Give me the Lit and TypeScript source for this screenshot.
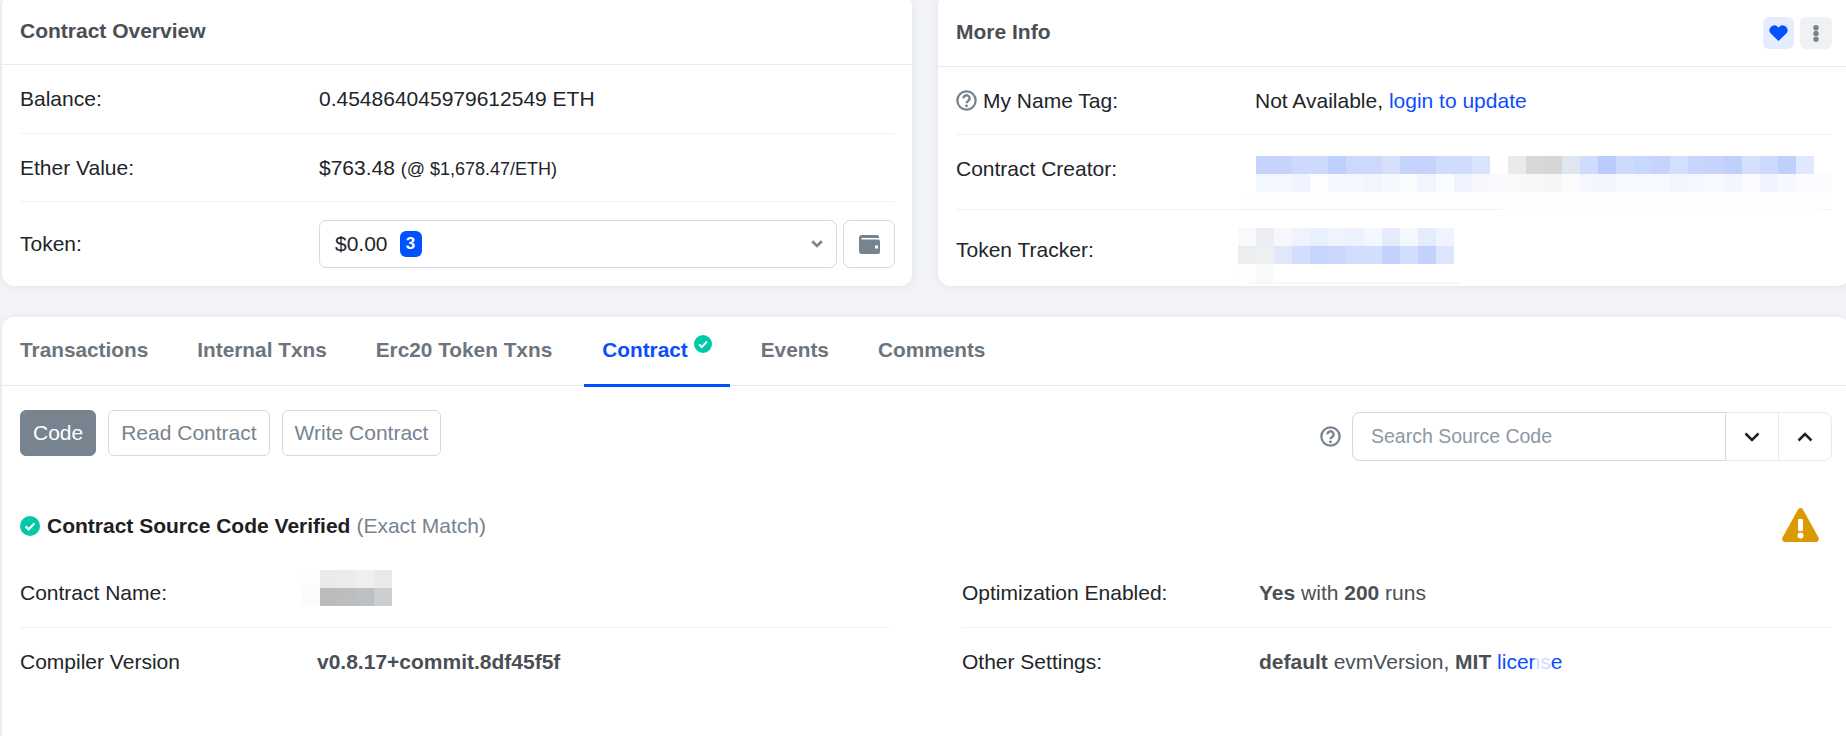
import { LitElement, html, css } from "lit";
import { customElement } from "lit/decorators.js";

const help = () => html`<svg class="help" viewBox="0 0 20 20" width="21" height="21" fill="none"><circle cx="10" cy="10" r="8.700" stroke="#77838f" stroke-width="2.200"/><path d="M7.100 8a2.900 2.900 0 1 1 4.400 2.400c-1 .6-1.500 1-1.500 2.200" stroke="#77838f" stroke-width="2.200"/><circle cx="10" cy="15.100" r="1.400" fill="#77838f"/></svg>`;
const check = (s: number) => html`<svg viewBox="0 0 20 20" width=${s} height=${s}><circle cx="10" cy="10" r="10" fill="#00c9a7"/><path d="M5.600 10.400l3 3 5.800-6.200" stroke="#fff" stroke-width="2.200" fill="none"/></svg>`;

const CREATOR = [
  "c5d3fd c5d3fd cedafd cedafd bccffd cbd9fd cbd9fd d6e0fd c5d3fc c5d3fc d0dcfd d0dcfd d8e4fe ffffff ebeae9 d9d8d9 d6d6d8 e0e5f2 d0dbfd b9ccfd cdd9fd c6d8fd c5d3fd d0e0fe c8d6fd c6d4fd bfd0fd d4e0fe cbdafd bfd0fd dee8fe",
  "f3f7ff f3f7ff eff4ff fcfdff f5f8ff f5f8ff f2f4fe f6f8ff fafbff f2f4fe fbfcff eef3fe f6f8fe f9fafe f9f9f7 f8f8f7 f5f5f5 fbfbfb f4f7ff f3f5fe f6f9ff f6f9ff f6f9ff f4f5fe f6f8ff f8faff f3f6fe f9fbff f0f4fe f6f8fe fbfcff fbfcff",
];
const TRACKER = [
  "f8f9fa edeef1 f6f7fd f0f3fe e9f0fd eff3fe ecf2fe f4f7fe e4ebfd f4f7fe e5ecfd f1f4fe",
  "ebeef0 eeeff1 e2e6f9 d2defd c6d5fd cbd8fd d2defd d2defd c3d2fd d2defd c3d2fd dbe6fe",
  "fdfdfd f9fafb",
];
const NAME = [
  "fdfdfd e9ebeb ebecec efefef e9e9e9",
  "fcfcfb b9bbbc bcbdbf bac0c3 cbcdcf",
];

@customElement("app-root")
export class AppRoot extends LitElement {
  static styles = css`
    :host { display: block; width: 1846px; height: 736px; overflow: hidden; background: #f3f4f7; font-family: "Liberation Sans", Arial, sans-serif; font-size: 21px; color: #212529; }
    .top { display: flex; gap: 26px; margin-top: -6px; padding-left: 2px; height: 292px; }
    .card { background: #fff; border-radius: 12px; box-shadow: 0 1px 8px rgba(151,164,175,.2); box-sizing: border-box; }
    .left { width: 910px; flex: none; }
    .right { width: 912px; flex: none; }
    .head { display: flex; align-items: center; justify-content: space-between; padding: 6px 18px 3px; box-sizing: border-box; border-bottom: 1px solid #e7eaf3; font-weight: 700; color: #4a4f55; }
    .left .head { height: 71px; }
    .right .head { height: 73px; }
    .actions { display: flex; gap: 6px; margin-top: 3px; }
    .act { width: 31px; height: 32px; border-radius: 6px; display: flex; align-items: center; justify-content: center; background: #e5ecff; }
    .act.grey { width: 32px; background: #f0f1f3; }
    .body { padding: 0 18px; }
    .row { display: flex; align-items: center; border-bottom: 1px solid #f0f2f7; box-sizing: border-box; position: relative; }
    .row:last-child { border-bottom: none; }
    .h68 { height: 68px; }
    .h69 { height: 69px; }
    .hsel { height: 84px; }
    .hcre { height: 75px; padding-bottom: 6px; }
    .htrk { height: 76px; padding-top: 4px; }
    .label { width: 299px; flex: none; display: flex; align-items: center; }
    .help { margin-right: 6px; flex: none; }
    .search .help { margin-right: 0; }
    .small { font-size: 18px; }
    a { color: #0d4dff; text-decoration: none; }
    .sel-row { display: flex; gap: 6px; }
    .select { width: 518px; height: 48px; box-sizing: border-box; border: 1px solid #d5dae2; border-radius: 7px; display: flex; align-items: center; padding: 0 13px 0 15px; gap: 12px; }
    .badge { background: #0052ff; color: #fff; font-weight: 700; font-size: 17px; border-radius: 6px; width: 22px; height: 26px; display: flex; align-items: center; justify-content: center; }
    .chev { margin-left: auto; }
    .wallet { width: 52px; height: 48px; box-sizing: border-box; border: 1px solid #d5dae2; border-radius: 7px; display: flex; align-items: center; justify-content: center; }
    .tabs-card { margin: 31px 0 0 2px; width: 1848px; height: 460px; }
    .tabs { display: flex; gap: 13px; height: 69px; box-sizing: border-box; border-bottom: 1px solid #e7eaf3; font-weight: 700; font-size: 20.800px; color: #6c757d; }
    .tab { padding: 0 18px 4px; display: flex; align-items: center; height: 69px; box-sizing: border-box; }
    .tab.on { color: #0d4dff; border-bottom: 3px solid #0052ff; padding-bottom: 1px; gap: 6px; height: 70px; margin: 0 0 -1px 1px; }
    .tab.on svg { margin-top: -13px; }
    .toolbar { display: flex; justify-content: space-between; padding: 24px 18px 0; height: 77px; box-sizing: border-box; }
    .btns { display: flex; gap: 12px; height: 46px; }
    .btn { border: 1px solid #d5dae2; border-radius: 6px; padding: 0 12px; display: flex; align-items: center; color: #77838f; box-sizing: border-box; }
    .btn.on { background: #77838f; border-color: #77838f; color: #fff; }
    .search { display: flex; align-items: center; gap: 11px; margin-top: 2px; height: 49px; }
    .group { display: flex; width: 480px; height: 49px; box-sizing: border-box; border: 1px solid #e7eaf3; border-radius: 8px; }
    .field { flex: 1; display: flex; align-items: center; padding-left: 18px; color: #8c98a4; font-size: 19.500px; border: 1px solid #d5dae2; border-radius: 8px 0 0 8px; margin: -1px 0 -1px -1px; }
    .ibtn { width: 52px; display: flex; align-items: center; justify-content: center; }
    .ibtn + .ibtn { border-left: 1px solid #e7eaf3; }
    .verified { display: flex; align-items: center; justify-content: space-between; padding: 40px 31px 0 18px; height: 86px; box-sizing: border-box; }
    .vl { display: flex; align-items: center; gap: 7px; font-weight: 700; color: #1e2022; }
    .muted { color: #77838f; font-weight: 400; margin-left: 6px; }
    .warn { margin-top: -2px; }
    .cols { display: flex; margin-top: 10px; padding-left: 18px; gap: 72px; }
    .col { width: 870px; flex: none; }
    .col + .col { width: 869px; }
    .clabel { width: 297px; flex: none; }
    .val { color: #4a4f55; position: relative; }
    b { font-weight: 700; color: #4a4f55; }
    .mosaic { position: absolute; display: flex; flex-direction: column; pointer-events: none; }
    .mosaic div { display: flex; }
    .mosaic span { display: block; width: 18px; height: 18px; flex: none; }
    .m-creator { left: 300px; top: 21px; }
    .m-tracker { left: 282px; top: 18px; }
    .m-name { left: 282px; top: 11px; }
    .smudge { position: absolute; left: 284px; top: 57px; width: 591px; height: 17px; background: #fdfdfd; border-radius: 14px 0 14px 0; }
    .smudge-line { position: absolute; left: 546px; top: 74px; width: 320px; height: 1px; background: #fdfdfd; }
    .trail { position: absolute; left: 294px; top: 72px; width: 210px; height: 2px; background: #f6f6fb; border-radius: 2px; }
    .mask { position: absolute; left: 276px; top: 0; width: 15px; height: 100%; background: rgba(255,255,255,.8); }
  `;

  mosaic(cls: string, rows: string[]) {
    return html`<div class="mosaic ${cls}">${rows.map(r => html`<div>${r.split(" ").map(c => html`<span style="background:#${c}"></span>`)}</div>`)}</div>`;
  }

  render() {
    return html`
      <div class="top">
        <section class="card left">
          <div class="head">Contract Overview</div>
          <div class="body">
            <div class="row h69"><div class="label">Balance:</div><div>0.454864045979612549 ETH</div></div>
            <div class="row h68"><div class="label">Ether Value:</div><div>$763.48 <span class="small">(@ $1,678.47/ETH)</span></div></div>
            <div class="row hsel"><div class="label">Token:</div>
              <div class="sel-row">
                <div class="select"><span>$0.00</span><span class="badge">3</span>
                  <svg class="chev" width="12" height="8" viewBox="0 0 12 8" fill="none"><path d="M1.200 1.300L6 6l4.800-4.700" stroke="#77838f" stroke-width="2.600"/></svg></div>
                <div class="wallet"><svg width="21" height="19" viewBox="0 0 21 19"><path d="M3 0h15a2 2 0 0 1 2 2v1H3a.7.7 0 0 0 0 1.400h16a2 2 0 0 1 2 2V17a2 2 0 0 1-2 2H3a3 3 0 0 1-3-3V3a3 3 0 0 1 3-3z" fill="#77838f"/><rect x="16" y="10.500" width="3" height="3" fill="#fff"/></svg></div>
              </div>
            </div>
          </div>
        </section>
        <section class="card right">
          <div class="head">More Info
            <div class="actions">
              <div class="act"><svg width="19" height="16" viewBox="0 0 19 16"><path d="M9.500 16L1.500 8.200A4.800 4.800 0 0 1 8.400 1.600l1.100 1.100 1.100-1.100a4.800 4.800 0 0 1 6.900 6.600z" fill="#0052ff"/></svg></div>
              <div class="act grey"><svg width="6" height="17" viewBox="0 0 6 17" fill="#77838f"><circle cx="3" cy="2.800" r="2.700"/><circle cx="3" cy="8.500" r="2.700"/><circle cx="3" cy="14.200" r="2.700"/></svg></div>
            </div>
          </div>
          <div class="body">
            <div class="row h68"><div class="label">${help()}My Name Tag:</div><div>Not Available, <a>login to update</a></div></div>
            <div class="row hcre"><div class="label">Contract Creator:</div>
              <div class="smudge"></div><div class="smudge-line"></div>${this.mosaic("m-creator", CREATOR)}</div>
            <div class="row htrk"><div class="label">Token Tracker:</div>
              ${this.mosaic("m-tracker", TRACKER)}<div class="trail"></div></div>
          </div>
        </section>
      </div>
      <section class="card tabs-card">
        <div class="tabs">
          <div class="tab">Transactions</div>
          <div class="tab">Internal Txns</div>
          <div class="tab">Erc20 Token Txns</div>
          <div class="tab on">Contract ${check(18)}</div>
          <div class="tab">Events</div>
          <div class="tab">Comments</div>
        </div>
        <div class="toolbar">
          <div class="btns">
            <div class="btn on">Code</div>
            <div class="btn">Read Contract</div>
            <div class="btn">Write Contract</div>
          </div>
          <div class="search">
            ${help()}
            <div class="group">
              <div class="field">Search Source Code</div>
              <div class="ibtn"><svg width="16" height="10" viewBox="0 0 16 10" fill="none"><path d="M1.500 1.500L8 8l6.500-6.500" stroke="#1e2022" stroke-width="2.500"/></svg></div>
              <div class="ibtn"><svg width="16" height="10" viewBox="0 0 16 10" fill="none"><path d="M1.500 8.500L8 2l6.500 6.500" stroke="#1e2022" stroke-width="2.500"/></svg></div>
            </div>
          </div>
        </div>
        <div class="verified">
          <div class="vl">${check(20)}<span>Contract Source Code Verified<span class="muted">(Exact Match)</span></span></div>
          <svg class="warn" width="37" height="34" viewBox="0 0 37 34"><path d="M18.500 0c1 0 1.900.6 2.500 1.600L36.500 29.500c1 1.900-.2 4.500-2.500 4.500H3c-2.300 0-3.500-2.600-2.500-4.500L16 1.600C16.600.6 17.500 0 18.500 0z" fill="#db9a04"/><rect x="16" y="11" width="5" height="12" rx="1" fill="#fff"/><circle cx="18.500" cy="27.500" r="3" fill="#fff"/></svg>
        </div>
        <div class="cols">
          <div class="col">
            <div class="row h69"><div class="clabel">Contract Name:</div>${this.mosaic("m-name", NAME)}</div>
            <div class="row h68"><div class="clabel">Compiler Version</div><div class="val"><b>v0.8.17+commit.8df45f5f</b></div></div>
          </div>
          <div class="col">
            <div class="row h69"><div class="clabel">Optimization Enabled:</div><div class="val"><b>Yes</b> with <b>200</b> runs</div></div>
            <div class="row h68"><div class="clabel">Other Settings:</div><div class="val"><b>default</b> evmVersion, <b>MIT</b> <a>license</a><div class="mask"></div></div></div>
          </div>
        </div>
      </section>
    `;
  }
}
